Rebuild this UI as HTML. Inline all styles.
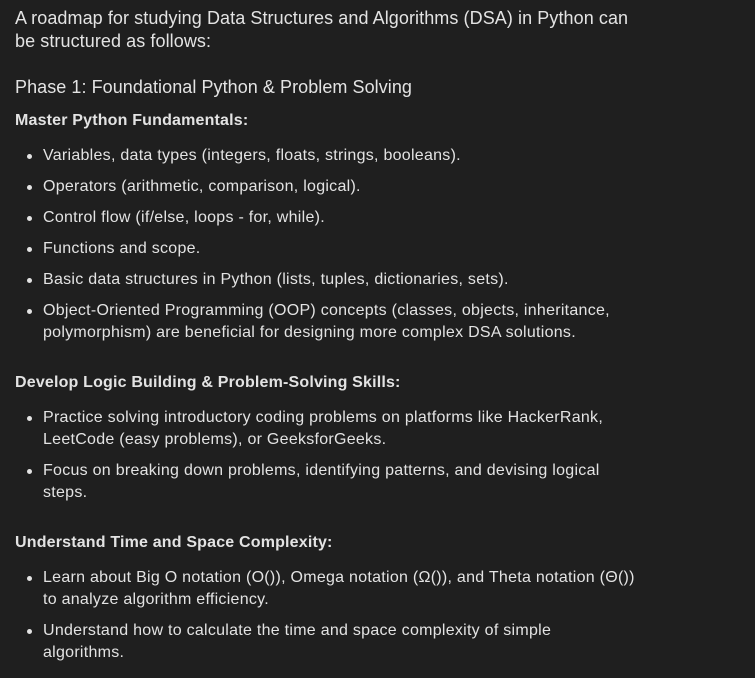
<!DOCTYPE html>
<html><head><style>
html,body{margin:0;padding:0;background:#1f1f1f;width:755px;height:678px;overflow:hidden}
body{font-family:"Liberation Sans",sans-serif;color:#e3e3e3;position:relative}
.t{position:absolute;left:15px;white-space:nowrap}
.p{font-size:18px;line-height:23px;letter-spacing:0.08px}
.h{font-size:18px;letter-spacing:0.06px}
.b{font-size:16px;font-weight:bold;letter-spacing:0.18px}
.li{position:absolute;left:43px;font-size:16px;line-height:22px;white-space:nowrap;letter-spacing:0.27px}
.li:before{content:"";position:absolute;left:-16px;top:9px;width:5px;height:5px;border-radius:50%;background:#e3e3e3}
</style></head><body>
<div class="t p" style="top:7px">A roadmap for studying Data Structures and Algorithms (DSA) in Python can<br>be structured as follows:</div>
<div class="t h" style="top:77px">Phase 1: Foundational Python &amp; Problem Solving</div>
<div class="t b" style="top:112px">Master Python Fundamentals:</div>
<div class="li" style="top:145px">Variables, data types (integers, floats, strings, booleans).</div>
<div class="li" style="top:176px">Operators (arithmetic, comparison, logical).</div>
<div class="li" style="top:207px">Control flow (if/else, loops - for, while).</div>
<div class="li" style="top:238px">Functions and scope.</div>
<div class="li" style="top:269px">Basic data structures in Python (lists, tuples, dictionaries, sets).</div>
<div class="li" style="top:300px">Object-Oriented Programming (OOP) concepts (classes, objects, inheritance,<br>polymorphism) are beneficial for designing more complex DSA solutions.</div>
<div class="t b" style="top:374px">Develop Logic Building &amp; Problem-Solving Skills:</div>
<div class="li" style="top:407px">Practice solving introductory coding problems on platforms like HackerRank,<br>LeetCode (easy problems), or GeeksforGeeks.</div>
<div class="li" style="top:460px">Focus on breaking down problems, identifying patterns, and devising logical<br>steps.</div>
<div class="t b" style="top:534px">Understand Time and Space Complexity:</div>
<div class="li" style="top:567px">Learn about Big O notation (O()), Omega notation (Ω()), and Theta notation (Θ())<br>to analyze algorithm efficiency.</div>
<div class="li" style="top:620px">Understand how to calculate the time and space complexity of simple<br>algorithms.</div>
</body></html>
